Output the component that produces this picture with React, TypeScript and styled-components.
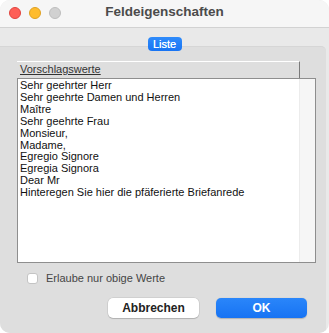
import React from "react";
import styled, { createGlobalStyle } from "styled-components";

const Global = createGlobalStyle`
  html, body { margin: 0; padding: 0; background: #ffffff; }
  body { font-family: "Liberation Sans", Arial, sans-serif; }
  * { box-sizing: border-box; }
`;

const Window = styled.div`
  width: 329px;
  height: 333px;
  border-radius: 10px;
  overflow: hidden;
  background: #e9e9e9;
  display: flex;
  flex-direction: column;
`;

const TitleBar = styled.div`
  height: 28px;
  flex: none;
  background: #f6f6f6;
  border-bottom: 1px solid #d2d2d2;
  display: flex;
  align-items: center;
  padding-left: 9px;
  position: relative;
`;

const Lights = styled.div`
  display: flex;
  gap: 8px;
  margin-top: -1px;
`;

const Light = styled.span<{ $c: string; $b: string }>`
  width: 12px;
  height: 12px;
  border-radius: 50%;
  background: ${(p) => p.$c};
  border: 0.5px solid ${(p) => p.$b};
`;

const Title = styled.div`
  position: absolute;
  left: 0;
  right: 0;
  top: 4px;
  text-align: center;
  font-size: 13.5px;
  font-weight: bold;
  color: #4b4b4b;
  pointer-events: none;
`;

const Body = styled.div`
  flex: 1;
  display: flex;
  flex-direction: column;
  padding-top: 9px;
  padding-right: 3px;
`;

const TabRow = styled.div`
  display: flex;
  justify-content: center;
  padding-left: 3px;
  position: relative;
  z-index: 1;
  margin-bottom: -5px;
`;

const Tab = styled.div`
  width: 34px;
  height: 14px;
  border-radius: 4px;
  background: linear-gradient(#2f8bfa, #1874f3);
  color: #ffffff;
  font-size: 11px;
  line-height: 14px;
  text-align: center;
  text-shadow: 0 0 0.4px #ffffff;
`;

const Group = styled.div`
  flex: 1;
  background: #dedede;
  border-top-right-radius: 5px;
  border-top: 1px solid #d6d6d6;
  padding: 14px 19px 0 17px;
  display: flex;
  flex-direction: column;
`;

const Table = styled.div`
  width: 299px;
  display: flex;
  flex-direction: column;
`;

const HeaderCell = styled.div`
  width: 283px;
  height: 17px;
  border-top: 1px solid #ffffff;
  border-right: 1px solid #7a7a7a;
  padding-left: 3px;
  font-size: 11px;
  line-height: 15px;
  color: #333333;
  text-decoration: underline;
`;

const ListBox = styled.div`
  height: 185px;
  border: 1px solid #8e8e8e;
  background: #ffffff;
  display: flex;
`;

const Items = styled.div`
  flex: 1;
  padding: 1px 0 0 2px;
  display: flex;
  flex-direction: column;
`;

const Item = styled.div`
  font-size: 11px;
  line-height: 11.9px;
  color: #111111;
  white-space: nowrap;
`;

const ScrollTrack = styled.div`
  width: 16px;
  background: #f6f6f6;
  border-left: 1px solid #ececec;
`;

const CheckRow = styled.label`
  display: flex;
  align-items: center;
  gap: 8px;
  margin-top: 9px;
  margin-left: 10px;
  font-size: 11px;
  color: #454545;
`;

const Box = styled.span`
  width: 11px;
  height: 11px;
  border-radius: 3px;
  background: #ffffff;
  border: 1px solid #c4c4c4;
`;

const Buttons = styled.div`
  display: flex;
  justify-content: flex-end;
  gap: 17px;
  margin-top: 14px;
`;

const Button = styled.button<{ $primary?: boolean }>`
  width: 91px;
  height: 20px;
  border-radius: 5px;
  border: none;
  font-family: "Liberation Sans", Arial, sans-serif;
  font-size: 12px;
  font-weight: bold;
  padding: 0;
  color: ${(p) => (p.$primary ? "#ffffff" : "#222222")};
  background: ${(p) =>
    p.$primary ? "linear-gradient(#2a86fa, #1773f3)" : "#ffffff"};
  box-shadow: ${(p) =>
    p.$primary
      ? "0 0.5px 1px rgba(0,0,0,0.2)"
      : "0 0 0 0.5px rgba(0,0,0,0.12), 0 1px 1px rgba(0,0,0,0.15)"};
`;

const items = [
  "Sehr geehrter Herr",
  "Sehr geehrte Damen und Herren",
  "Maître",
  "Sehr geehrte Frau",
  "Monsieur,",
  "Madame,",
  "Egregio Signore",
  "Egregia Signora",
  "Dear Mr",
  "Hinteregen Sie hier die pfäferierte Briefanrede",
];

export default function App() {
  return (
    <>
      <Global />
      <Window>
        <TitleBar>
          <Lights>
            <Light $c="#fe5f57" $b="#e0443e" />
            <Light $c="#febc2e" $b="#dea123" />
            <Light $c="#d1d1d1" $b="#bdbdbd" />
          </Lights>
          <Title>Feldeigenschaften</Title>
        </TitleBar>
        <Body>
          <TabRow>
            <Tab>Liste</Tab>
          </TabRow>
          <Group>
            <Table>
              <HeaderCell>Vorschlagswerte</HeaderCell>
              <ListBox>
                <Items>
                  {items.map((t) => (
                    <Item key={t}>{t}</Item>
                  ))}
                </Items>
                <ScrollTrack />
              </ListBox>
            </Table>
            <CheckRow>
              <Box />
              Erlaube nur obige Werte
            </CheckRow>
            <Buttons>
              <Button>Abbrechen</Button>
              <Button $primary>OK</Button>
            </Buttons>
          </Group>
        </Body>
      </Window>
    </>
  );
}
